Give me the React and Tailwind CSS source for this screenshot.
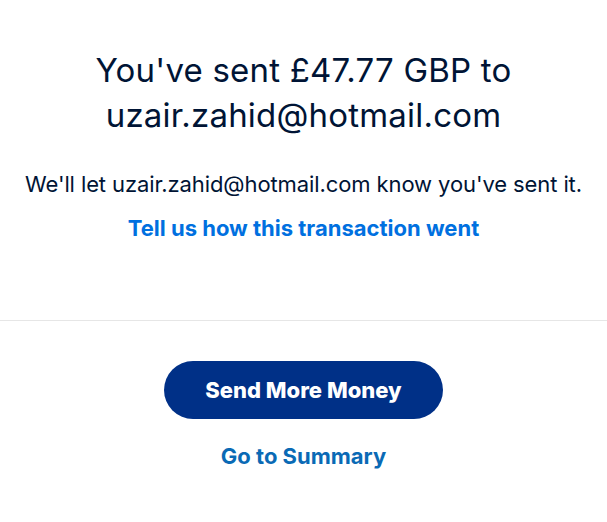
import React from 'react';

const App = () => {
  return (
    <div className="w-[607px] h-[522px] bg-white overflow-hidden" style={{ fontFamily: 'Inter, "Noto Sans", sans-serif' }}>
      <div className="flex flex-col items-center text-center pt-[48px] px-4">
        <h1 className="text-[33px] leading-[45px] font-normal tracking-[0.2px] text-[#001435]">
          You've sent £47.77 GBP to
          <br />
          uzair.zahid@hotmail.com
        </h1>
        <p className="mt-[32px] text-[22px] leading-[28px] tracking-[-0.1px] text-[#001435] whitespace-nowrap">
          We'll let uzair.zahid@hotmail.com know you've sent it.
        </p>
        <a className="mt-[16px] text-[22px] leading-[28px] font-bold text-[#0070e0]">
          Tell us how this transaction went
        </a>
      </div>
      <div className="mt-[78px] border-t border-[#e6e6e6]" />
      <div className="flex flex-col items-center pt-[40px]">
        <button className="w-[279px] h-[58px] rounded-full bg-[#003087] text-white text-[22px] font-extrabold">
          Send More Money
        </button>
        <a className="mt-[23px] text-[22px] leading-[28px] font-bold text-[#0a6ab5]">
          Go to Summary
        </a>
      </div>
    </div>
  );
};

export default App;
